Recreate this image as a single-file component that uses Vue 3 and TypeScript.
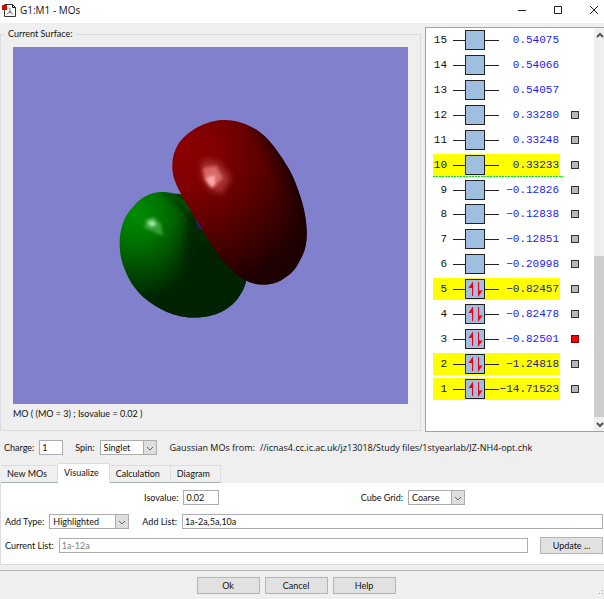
<script setup lang="ts">
import { ref } from 'vue'

interface Orbital {
  index: number
  energy: string
  occupied: boolean
  highlighted: boolean
  marker: boolean
}

const energies = [
  '0.54075', '0.54066', '0.54057', '0.33280', '0.33248', '0.33233', '−0.12826', '−0.12838',
  '−0.12851', '−0.20998', '−0.82457', '−0.82478', '−0.82501', '−1.24818', '−14.71523',
]
const highlightedSet = [1, 2, 5, 10]
const current = ref(3)

const orbitals: Orbital[] = energies.map((energy, i) => {
  const index = energies.length - i
  return {
    index,
    energy,
    occupied: index <= 5,
    highlighted: highlightedSet.includes(index),
    marker: index <= 12,
  }
})

const tabs = ['New MOs', 'Visualize', 'Calculation', 'Diagram']
const activeTab = ref('Visualize')
const charge = ref('1')
const spin = ref('Singlet')
const isovalue = ref('0.02')
const grid = ref('Coarse')
const addType = ref('Highlighted')
const addList = ref('1a-2a,5a,10a')
const currentList = ref('1a-12a')
</script>

<template>
  <div class="window">
    <header class="titlebar">
      <svg class="app-icon" viewBox="0 0 14 14" aria-hidden="true">
        <path d="M2.500 1.500H10.500L13.500 4.500V13.500H2.500Z" fill="#fff" stroke="#333" />
        <path d="M10.500 1.500V4.500H13.500" fill="none" stroke="#222" />
        <path d="M8 5V8L5 11.500M8 8L11 11.500M7 9.500H9" fill="none" stroke="#777" />
        <rect x="0" y="2" width="5" height="5" fill="#e80000" />
      </svg>
      <h1>G1:M1 - MOs</h1>
      <div class="window-buttons">
        <button type="button" aria-label="Minimize"><svg viewBox="0 0 10 10"><path d="M1 5.5H9" /></svg></button>
        <button type="button" aria-label="Maximize"><svg viewBox="0 0 10 10"><path d="M1.5 1.5H8.5V8.5H1.5Z" /></svg></button>
        <button type="button" aria-label="Close"><svg viewBox="0 0 10 10"><path d="M1 1L9 9M9 1L1 9" /></svg></button>
      </div>
    </header>

    <main class="workspace">
      <fieldset class="surface">
        <legend>Current Surface:</legend>
        <div class="surface-body">
          <svg class="view" viewBox="13 47 395 357" role="img" aria-label="Molecular orbital surface">
            <defs>
              <radialGradient id="redLobe" gradientUnits="userSpaceOnUse" cx="184" cy="152" r="142">
                <stop offset="0" stop-color="#8c0000" />
                <stop offset=".25" stop-color="#800000" />
                <stop offset=".55" stop-color="#5c0000" />
                <stop offset=".82" stop-color="#380000" />
                <stop offset="1" stop-color="#240000" />
              </radialGradient>
              <radialGradient id="greenLobe" gradientUnits="userSpaceOnUse" cx="136" cy="215" r="88">
                <stop offset="0" stop-color="#008c00" />
                <stop offset=".3" stop-color="#007400" />
                <stop offset=".65" stop-color="#004800" />
                <stop offset=".95" stop-color="#002800" />
              </radialGradient>
              <clipPath id="redClip">
                <path d="M172.300 167C172 150 180 138 193 130C202 124 213 120.500 222 120C236 119.500 247 124 257 130C267 137 274 146 280 155C288 167 293 175 297 187C303 203 306.500 217 306.700 232C307 243 305 252 300 260C296 269 291 274 283 279C277 283 271 284.500 263 284.500C256 284.500 252 283 247 281C240 278 235 274 230 268C223 262 219 255 213 247C206 236 200 226 193 215C189 207 184 201 180 192C175 182 172.500 176 172.300 167Z" />
              </clipPath>
              <clipPath id="greenClip">
                <path d="M160 192C167 191.500 173 194 180 194L205 215L246.500 280C245 286 243 291 240 295C236 302 230 307 223 311C213 316 204 317.500 193 317.500C183 317.500 175 315 167 312C158 308 150 303 143 297C135 289 129 281 125 270C121 261 119.500 252 119.700 242C120 228 124 216 133 207C140 198 149 193 160 192Z" />
              </clipPath>
              <filter id="soft" x="-50%" y="-50%" width="200%" height="200%"><feGaussianBlur stdDeviation="7" /></filter>
              <filter id="softer" x="-50%" y="-50%" width="200%" height="200%"><feGaussianBlur stdDeviation="3" /></filter>
              <filter id="glint" x="-50%" y="-50%" width="200%" height="200%"><feGaussianBlur stdDeviation="1.500" /></filter>
            </defs>
            <g clip-path="url(#greenClip)">
              <rect x="110" y="180" width="150" height="150" fill="url(#greenLobe)" />
              <path d="M188 222L205 215L260 290L220 330H150L150 306L181 278Z" fill="#002300" filter="url(#soft)" />
              <path d="M170 197C180 203 188 215 193 232L199 246L215 240L185 190Z" fill="#002c00" filter="url(#softer)" />
              <path d="M163 194C174 195 184 200 191 212" fill="none" stroke="#005400" stroke-width="4" filter="url(#glint)" />
              <path d="M146 219L154 217L161 224L163 236L152 231L144 228Z" fill="#36a036" filter="url(#glint)" />
              <path d="M147 222L153 220L157 225L151 227Z" fill="#a0eda0" filter="url(#glint)" />
            </g>
            <path d="M194 217L198 221L205 232L199 228Z" fill="#2020a0" />
            <g clip-path="url(#redClip)">
              <rect x="165" y="115" width="150" height="175" fill="url(#redLobe)" />
              <path d="M254 122C278 151 294 190 299 223C294 254 274 269 237 275L260 300L320 285V150L270 110Z" fill="#1c0000" filter="url(#soft)" />
              <path d="M202 160L219 162L231 178L222 194L208 188L202 176Z" fill="#a63030" filter="url(#softer)" />
              <path d="M203 168L216 166L223 178L213 188L205 181Z" fill="#d86868" filter="url(#glint)" />
              <path d="M206 178L215 175L215 184L211 187Z" fill="#ffaaaa" filter="url(#glint)" />
            </g>
          </svg>
          <p class="caption">MO ( (MO = 3) ; Isovalue = 0.02 )</p>
        </div>
      </fieldset>

      <section class="levels" aria-label="Orbital energies">
        <ol class="level-list">
          <li v-for="o in orbitals" :key="o.index" class="level" :class="{ homo: o.index === 10 }">
            <div class="band" :class="{ highlighted: o.highlighted }">
              <span class="index">{{ o.index }}</span>
              <svg class="box" viewBox="0 0 46 20" aria-hidden="true">
                <path d="M0 10.500H46" stroke="#222" />
                <rect x="12.500" y=".5" width="19" height="19" fill="#a0bedf" stroke="#222" />
                <g v-if="o.occupied" stroke="#f00010" fill="#f00010">
                  <path d="M19.500 17V4" />
                  <path d="M20 2.500L15.500 9H20Z" stroke="none" />
                  <path d="M25.500 3V16" />
                  <path d="M25 18L29.500 11.500H25Z" stroke="none" />
                </g>
              </svg>
              <span class="energy">{{ o.energy }}</span>
            </div>
            <button
              v-if="o.marker"
              type="button"
              class="marker"
              :class="{ red: o.index === current }"
              :aria-label="`Show orbital ${o.index}`"
              @click="current = o.index"
            ></button>
          </li>
        </ol>
        <div class="scrollbar" aria-hidden="true">
          <svg viewBox="0 0 10 14"><path d="M3 9L6 6L9 9" /></svg>
          <div class="track"><div class="thumb"></div></div>
          <svg viewBox="0 0 10 14"><path d="M3 6L6 9L9 6" /></svg>
        </div>
      </section>
    </main>

    <section class="state">
      <label for="charge">Charge:</label>
      <input id="charge" v-model="charge" class="charge" type="text" />
      <label for="spin" class="spin-label">Spin:</label>
      <span class="select spin">
        <select id="spin" v-model="spin"><option>Singlet</option><option>Triplet</option></select>
        <svg viewBox="0 0 12 13" aria-hidden="true"><path d="M3 6L6 9L9 6" /></svg>
      </span>
      <p class="source"><span>Gaussian MOs from:</span><span>//icnas4.cc.ic.ac.uk/jz13018/Study files/1styearlab/JZ-NH4-opt.chk</span></p>
    </section>

    <nav class="tabs" role="tablist">
      <button
        v-for="tab in tabs"
        :key="tab"
        type="button"
        role="tab"
        :aria-selected="tab === activeTab"
        :class="{ active: tab === activeTab }"
        @click="activeTab = tab"
      >{{ tab }}</button>
    </nav>

    <section class="panel">
      <div class="row top">
        <div class="field">
          <label for="iso">Isovalue:</label>
          <input id="iso" v-model="isovalue" type="text" />
        </div>
        <div class="field">
          <label for="grid">Cube Grid:</label>
          <span class="select grid">
            <select id="grid" v-model="grid"><option>Coarse</option><option>Medium</option><option>Fine</option></select>
            <svg viewBox="0 0 12 13" aria-hidden="true"><path d="M3 6L6 9L9 6" /></svg>
          </span>
        </div>
      </div>
      <div class="row">
        <label for="addType">Add Type:</label>
        <span class="select type">
          <select id="addType" v-model="addType"><option>Highlighted</option><option>All</option></select>
          <svg viewBox="0 0 12 13" aria-hidden="true"><path d="M3 6L6 9L9 6" /></svg>
        </span>
        <label for="addList" class="add-label">Add List:</label>
        <input id="addList" v-model="addList" class="grow" type="text" />
      </div>
      <div class="row">
        <label for="currentList">Current List:</label>
        <input id="currentList" v-model="currentList" class="grow muted" type="text" readonly />
        <button type="button" class="push update">Update ...</button>
      </div>
    </section>

    <footer class="actions">
      <button type="button" class="push">Ok</button>
      <button type="button" class="push">Cancel</button>
      <button type="button" class="push">Help</button>
      <svg class="grip" viewBox="0 0 6 6" aria-hidden="true"><path d="M4 0h1v1h-1zM4 3h1v1h-1zM1 3h1v1h-1z" /></svg>
    </footer>
  </div>
</template>

<style>
body {
  margin: 0;
}
</style>

<style scoped>
.window {
  display: flex;
  flex-direction: column;
  min-height: 100vh;
  background: #efefef;
  color: #111;
  font: 9px/12px Lato, "Liberation Sans", sans-serif;
}
.window *,
.window *::after {
  box-sizing: border-box;
}
button,
input,
select {
  font: inherit;
  color: inherit;
  border-radius: 0;
}
.titlebar {
  display: flex;
  align-items: center;
  height: 23px;
  padding: 0 0 3px 2px;
  background: #fff;
}
.app-icon {
  width: 14px;
  height: 14px;
}
h1 {
  flex: 1;
  margin: 0 0 0 4px;
  font: 10px/20px "Open Sans", "Noto Sans", sans-serif;
}
.window-buttons {
  display: flex;
  gap: 16px;
}
.window-buttons button {
  width: 20px;
  height: 20px;
  padding: 5px;
  border: 0;
  background: none;
}
.window-buttons svg {
  display: block;
  width: 10px;
  height: 10px;
  fill: none;
  stroke: #222;
}
.workspace {
  display: flex;
  flex: 1;
  gap: 4px;
  padding-top: 4px;
}
.surface {
  display: flex;
  flex: 1;
  min-width: 0;
  margin: 0 0 1px;
  padding: 0 12px 10px;
  border: 1px solid #dcdcdc;
}
legend {
  margin-left: -9px;
  padding: 0 4px;
  line-height: 14px;
}
.surface-body {
  display: flex;
  flex: 1;
  flex-direction: column;
  padding-top: 6px;
}
.view {
  flex: 1;
  width: 100%;
  min-height: 0;
  background: #8080cc;
}
.caption {
  margin: 4px 0 0;
}
.levels {
  display: flex;
  width: 179px;
  border: 1px solid #a0a0a8;
  border-right: 0;
  background: #fff;
}
.level-list {
  display: grid;
  flex: 1;
  grid-template-rows: repeat(15, 1fr);
  margin: 0;
  padding: 0 0 30px 7px;
  list-style: none;
}
.level {
  position: relative;
  display: flex;
  align-items: center;
  gap: 11px;
}
.homo::after {
  content: "";
  position: absolute;
  left: 0;
  bottom: 0;
  width: 130px;
  height: 1px;
  background: repeating-linear-gradient(90deg, #00e800 0 2px, #fff 2px 3px);
}
.band {
  display: flex;
  align-items: center;
  width: 127px;
  height: 22px;
  padding-right: 1px;
  font: 11px/22px "Liberation Mono", monospace;
}
.highlighted {
  background: #ffff00;
}
.index {
  width: 14px;
  margin-right: 6px;
  text-align: right;
}
.box {
  width: 46px;
  height: 20px;
}
.energy {
  flex: 1;
  text-align: right;
  white-space: nowrap;
  color: #1c1cf4;
}
.highlighted .energy {
  color: #202090;
}
.marker {
  width: 8px;
  height: 8px;
  padding: 0;
  border: 1px solid #333;
  background: #b8b8b8;
}
.marker.red {
  border-color: #800000;
  background: #ff0000;
}
.scrollbar {
  display: flex;
  flex-direction: column;
  width: 10px;
  background: #efefef;
}
.scrollbar svg {
  width: 10px;
  height: 14px;
  fill: none;
  stroke: #555;
  stroke-width: 2;
}
.track {
  display: flex;
  flex: 1;
  flex-direction: column;
  justify-content: flex-end;
}
.thumb {
  height: 43%;
  background: #cdcdcd;
}
input {
  width: 36px;
  height: 15px;
  padding: 0 2px;
  border: 1px solid #acacb4;
  background: #fff;
}
.select {
  position: relative;
  display: block;
  height: 15px;
  border: 1px solid #acacac;
  background: #fff;
}
select {
  display: block;
  width: 100%;
  height: 13px;
  padding: 0 0 0 3px;
  border: 0;
  background: none;
  appearance: none;
}
.select svg {
  position: absolute;
  top: 0;
  right: 0;
  width: 12px;
  height: 13px;
  background: #dedede;
  outline: 1px solid #acacac;
  fill: none;
  stroke: #666;
  pointer-events: none;
}
.state {
  display: flex;
  align-items: center;
  height: 31px;
  padding: 0 4px;
}
.charge {
  width: 24px;
  margin-left: 5px;
}
.spin-label {
  margin: 0 5px 0 12px;
}
.spin {
  width: 57px;
}
.source {
  display: flex;
  gap: 5px;
  margin: 0 0 0 13px;
  font: 9px/12px "Open Sans", "Noto Sans", sans-serif;
  white-space: nowrap;
}
.tabs {
  display: flex;
  align-items: flex-end;
  height: 20px;
  padding-left: 1px;
}
.tabs button {
  height: 18px;
  padding: 0 10px 0 6px;
  border: 1px solid #dcdcdc;
  border-left-width: 0;
  border-bottom-color: #a8b0ac;
  background: #f0f0f0;
}
.tabs button.active {
  height: 20px;
  border-bottom-color: #fff;
  background: #fff;
}
.panel {
  display: flex;
  flex-direction: column;
  gap: 7px;
  height: 82px;
  padding: 6px 1px 0 4px;
  border: 1px solid #dcdcdc;
  border-top: 0;
  border-right: 0;
  background: #fff;
}
.row {
  display: flex;
  align-items: center;
  height: 17px;
}
.row label {
  margin-right: 5px;
  white-space: nowrap;
}
.top {
  justify-content: space-between;
  padding: 0 138px 0 139px;
}
.field {
  display: flex;
  align-items: center;
}
.grid {
  width: 57px;
}
.type {
  width: 80px;
}
.add-label {
  margin-left: 13px;
}
.grow {
  flex: 1;
  min-width: 0;
}
.muted {
  color: #808080;
}
.push {
  width: 63px;
  height: 17px;
  padding: 0;
  border: 1px solid #b4b4b4;
  background: #e1e1e1;
}
.update {
  margin-left: 12px;
}
.actions {
  position: relative;
  display: flex;
  justify-content: center;
  gap: 5px;
  height: 29px;
  margin-top: 5px;
  padding: 6px 12px 0 0;
  border-top: 1px solid #b0b4b2;
}
.grip {
  position: absolute;
  right: 0;
  bottom: 3px;
  width: 6px;
  height: 6px;
  fill: #a0a0a0;
}
</style>
